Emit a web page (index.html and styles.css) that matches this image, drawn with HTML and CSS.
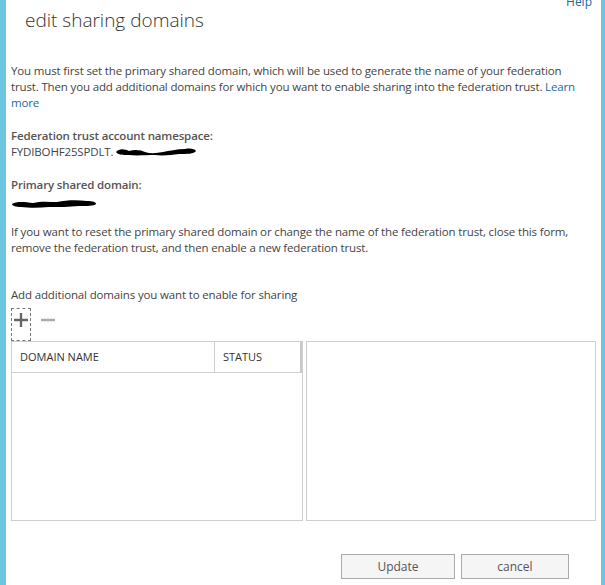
FILE: index.html
```html
<!DOCTYPE html>
<html>
<head>
<meta charset="utf-8">
<link rel="stylesheet" href="styles.css">
</head>
<body>
<div class="frame">
  <div class="page">
    <a class="help">Help</a>
    <h1 class="title">edit sharing domains</h1>
    <p class="intro">You must first set the primary shared domain, which will be used to generate the name of your federation trust. Then you add additional domains for which you want to enable sharing into the federation trust. <a class="link">Learn more</a></p>
    <div class="field">
      <div class="label">Federation trust account namespace:</div>
      <div class="value">FYDIBOHF25SPDLT.<svg class="redact r1" width="82" height="12" viewBox="0 0 82 12"><path d="M1 6 C4 2 10 3 14 5 C20 3 26 4 30 6 C36 8 42 7 48 6 C54 5 62 3 70 3 C76 2 80 3 81 5 C79 8 72 8 64 8 C56 9 48 10 40 9 C30 9 22 10 14 9 C8 9 3 9 1 6 Z" fill="#000"/></svg></div>
    </div>
    <div class="field">
      <div class="label">Primary shared domain:</div>
      <div class="value"><svg class="redact r2" width="86" height="10" viewBox="0 0 86 10"><path d="M1 5 C6 2 14 3 22 4 C30 2 38 3 46 3 C56 1 66 1 76 2 C82 2 85 3 85 5 C83 7 76 7 68 7 C58 8 48 8 38 8 C28 9 18 9 10 8 C5 8 1 7 1 5 Z" fill="#000"/></svg></div>
    </div>
    <p class="note">If you want to reset the primary shared domain or change the name of the federation trust, close this form, remove the federation trust, and then enable a new federation trust.</p>
    <div class="add-label">Add additional domains you want to enable for sharing</div>
    <div class="toolbar">
      <span class="tool plus"><svg width="16" height="16" viewBox="0 0 16 16"><path d="M8 1V15M1 8H15" stroke="#666" stroke-width="2.4"/></svg></span>
      <span class="tool minus"><svg width="16" height="16" viewBox="0 0 16 16"><path d="M1 8H15" stroke="#aaa" stroke-width="2.4"/></svg></span>
    </div>
    <div class="lists">
      <div class="table">
        <div class="thead">
          <div class="th name">DOMAIN NAME</div>
          <div class="th status">STATUS</div>
        </div>
      </div>
      <div class="detail"></div>
    </div>
    <div class="buttons">
      <button class="btn">Update</button>
      <button class="btn">cancel</button>
    </div>
  </div>
</div>
</body>
</html>
```
FILE: styles.css
```css
* { box-sizing: border-box; }
html, body { margin: 0; padding: 0; }
body {
  width: 605px;
  height: 585px;
  overflow: hidden;
  background: #6cc6e2;
  font-family: "Segoe UI", "Open Sans", "Noto Sans", sans-serif;
}
.frame {
  height: 585px;
  padding: 0 4px 0 6px;
}
.page {
  position: relative;
  height: 100%;
  background: #fff;
  padding: 0 0 0 5px;
  color: #444;
}
.help {
  position: absolute;
  right: 9px;
  top: -7px;
  font-size: 12px;
  color: #1a6aa0;
}
.title {
  margin: 0;
  padding: 7px 0 0 14px;
  height: 63px;
  font-size: 19px;
  font-weight: 300;
  color: #333;
  line-height: 26px;
}
.intro, .note {
  margin: 0;
  font-size: 11.5px;
  line-height: 16px;
  width: 580px;
  letter-spacing: -0.15px;
}
.link { color: #1a6aa0; }
.field { margin-top: 17px; font-size: 11.5px; line-height: 16px; letter-spacing: -0.15px; }
.label { font-weight: 600; color: #555; }
.value { height: 16px; display: flex; align-items: center; }
.redact { display: block; }
.r1 { margin-left: 2px; }
.r2 { margin-top: 5px; }
.note { margin-top: 15px; }
.add-label {
  margin-top: 31px;
  font-size: 11.5px;
  line-height: 16px;
  letter-spacing: -0.15px;
}
.toolbar {
  display: flex;
  gap: 9px;
  margin-top: 5px;
  height: 33px;
}
.tool { display: flex; justify-content: center; }
.plus {
  width: 20px;
  height: 33px;
  border: 1px dashed #777;
  align-items: flex-start;
  padding-top: 3px;
}
.minus { align-items: flex-start; padding-top: 4px; }
.lists {
  display: flex;
  gap: 3px;
  height: 180px;
}
.table {
  width: 292px;
  border: 1px solid #cfcfcf;
}
.thead {
  display: flex;
  height: 31px;
  border-bottom: 1px solid #cfcfcf;
  border-right: 2px solid #c8c8c8;
}
.th {
  font-size: 11px;
  color: #333;
  line-height: 30px;
  padding-left: 8px;
}
.th.name { width: 203px; border-right: 1px solid #cfcfcf; }
.th.status { flex: 1; }
.detail {
  width: 290px;
  border: 1px solid #cfcfcf;
}
.buttons {
  display: flex;
  gap: 6px;
  margin: 33px 0 0 330px;
}
.btn {
  height: 25px;
  border: 1px solid #ababab;
  background: #f5f5f5;
  font-family: inherit;
  font-size: 12px;
  color: #555;
  padding: 0;
}
.btn:first-child { width: 114px; }
.btn:last-child { width: 108px; }
```
